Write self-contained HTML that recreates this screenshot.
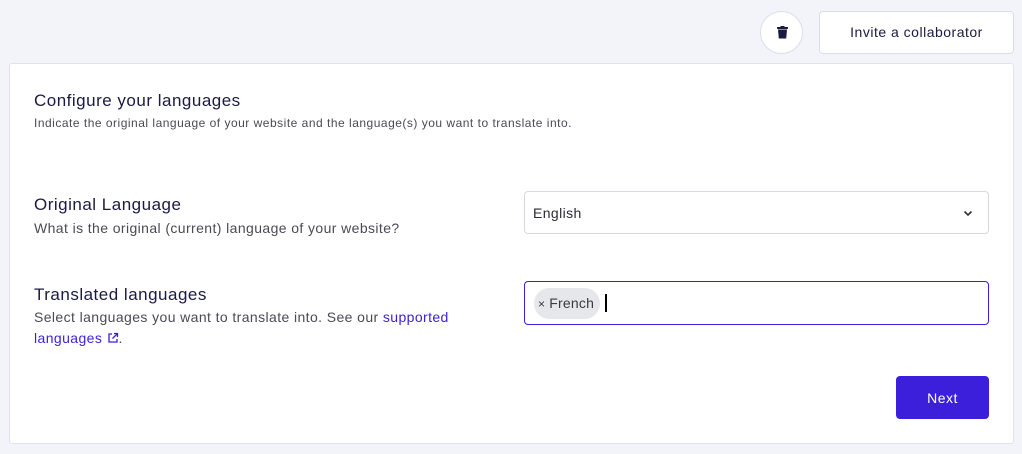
<!DOCTYPE html>
<html><head><style>
*{box-sizing:border-box;margin:0;padding:0}
body{width:1022px;height:454px;background:#f3f4f9;font-family:"Liberation Sans",sans-serif;position:relative;overflow:hidden;color:#1b1a42}
.abs{position:absolute}
.trash{left:760px;top:11px;width:43px;height:43px;border-radius:50%;background:#fff;border:1px solid #dcdde6}
.invite{left:819px;top:11px;width:195px;height:43px;background:#fff;border:1px solid #dcdde6;border-radius:4px;font-size:14px;text-align:center;line-height:41px;color:#1b1a42;letter-spacing:0.5px}
.card{left:9px;top:63px;width:1005px;height:381px;background:#fff;border:1px solid #e2e3ea;border-radius:3px}
.t{font-size:17px;color:#1b1a42;letter-spacing:0.5px}
.s{font-size:14px;color:#4a4a55;letter-spacing:0.4px}
.xs{font-size:12px;color:#4a4a55;letter-spacing:0.5px}
a{color:#3b1fdb;text-decoration:none}
.sel{left:524px;top:191px;width:465px;height:43px;border:1px solid #d8d9de;border-radius:4px;font-size:14px;line-height:43px;padding-left:8px;color:#2a2a33;letter-spacing:0.4px}
.inp{left:524px;top:281px;width:465px;height:44px;border:1.5px solid #3b1fdb;border-radius:4px}
.chip{left:9px;top:6px;height:31px;width:66px;border-radius:16px;background:#e6e7ea;font-size:14px;line-height:31px;padding-left:4px;color:#3a3a44;letter-spacing:0.2px}
.next{left:896px;top:376px;width:93px;height:43px;background:#3b1fdb;border-radius:4px;color:#fff;font-size:14px;text-align:center;line-height:44px;letter-spacing:0.5px}
</style></head><body>
<div class="abs trash"><svg class="abs" style="left:16px;top:14px" width="11" height="13" viewBox="0 0 11 13"><rect x="0" y="1" width="11" height="2" rx="0.5" fill="#1b1a42"/><rect x="3.5" y="0" width="4" height="2" fill="#1b1a42"/><path d="M1 3.5h9l-.8 9h-7.4z" fill="#1b1a42"/></svg></div>
<div class="abs invite">Invite a collaborator</div>
<div class="abs card"></div>
<div class="abs t" style="left:34px;top:91px">Configure your languages</div>
<div class="abs xs" style="left:34px;top:116px">Indicate the original language of your website and the language(s) you want to translate into.</div>
<div class="abs t" style="left:34px;top:195px">Original Language</div>
<div class="abs s" style="left:34px;top:220px">What is the original (current) language of your website?</div>
<div class="abs t" style="left:34px;top:285px">Translated languages</div>
<div class="abs s" style="left:34px;top:307px;width:450px;line-height:21px">Select languages you want to translate into. See our <a>supported<br>languages <svg width="12" height="12" viewBox="0 0 12 12" style="vertical-align:-1px"><path d="M5 2H2v8h8V7M7 1.5h3.5V5M10.5 1.5 5.5 6.5" fill="none" stroke="#3b1fdb" stroke-width="1.3"/></svg></a>.</div>
<div class="abs sel">English<svg class="abs" style="left:438px;top:18px" width="10" height="7" viewBox="0 0 10 7"><path d="M1.5 1.5 5 5l3.5-3.5" fill="none" stroke="#333" stroke-width="1.6"/></svg></div>
<div class="abs inp"><div class="abs chip"><span style="font-size:12px">×</span> French</div><div class="abs" style="left:80px;top:12px;width:1.5px;height:18px;background:#000"></div></div>
<div class="abs next">Next</div>
</body></html>
